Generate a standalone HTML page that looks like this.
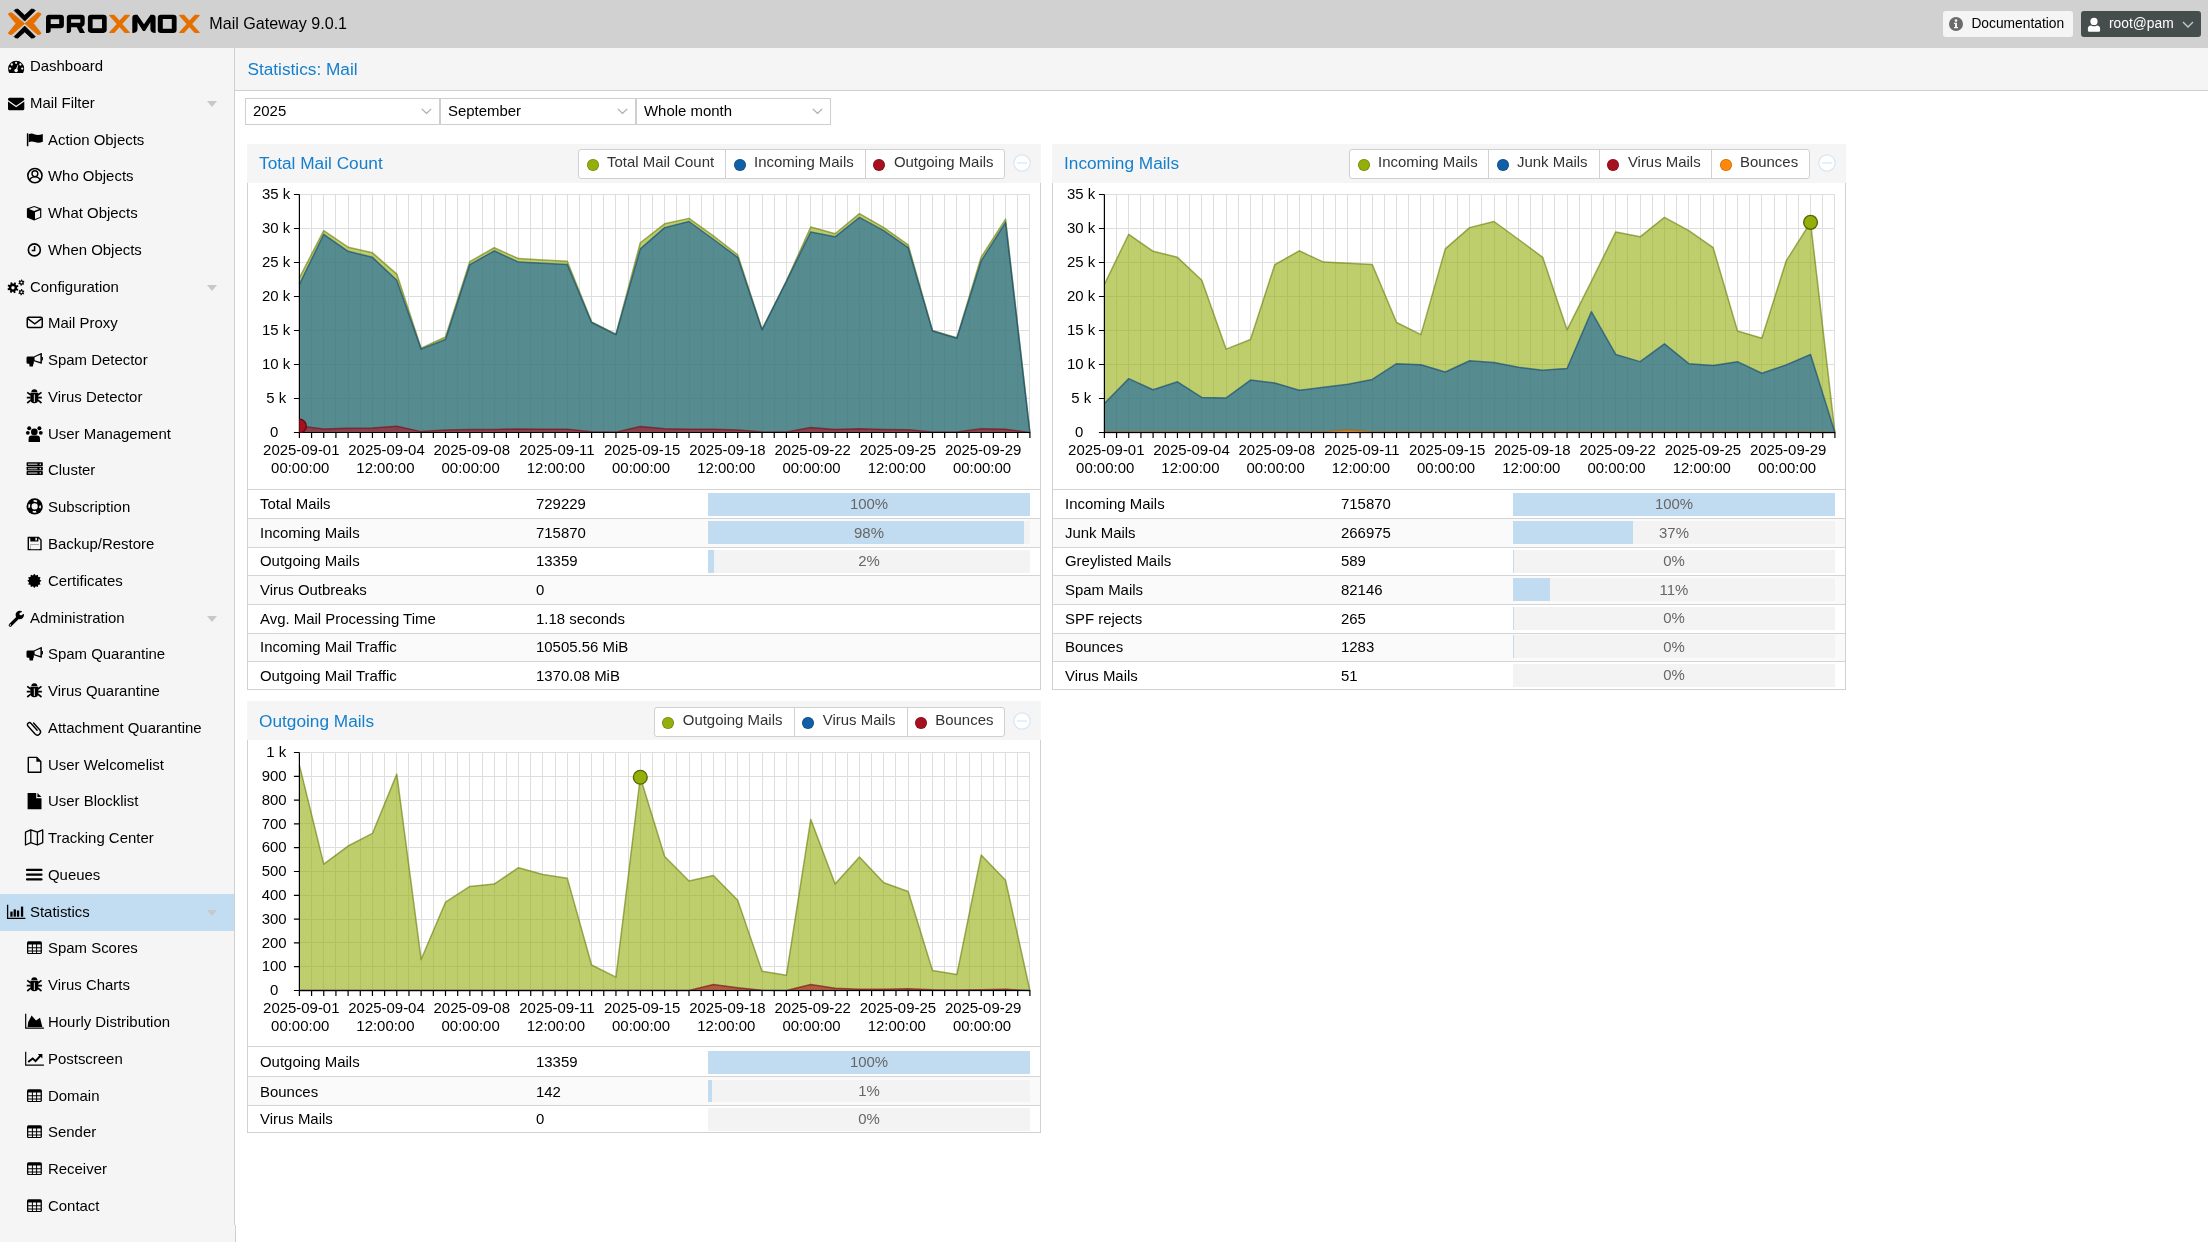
<!DOCTYPE html><html><head><meta charset="utf-8"><title>Proxmox Mail Gateway</title><style>*{box-sizing:border-box}
html,body{margin:0;padding:0}
body{will-change:transform;width:2208px;height:1242px;overflow:hidden;background:#fff;font-family:"Liberation Sans",sans-serif;position:relative;color:#000;font-size:14.95px}
.a{position:absolute}
svg{display:block}
#hdr{left:0;top:0;width:2208px;height:48px;background:#d1d1d1}
#ver{left:209.3px;top:13px;font-size:16.1px;line-height:20px;color:#000;white-space:nowrap}
.hbtn{top:11px;height:26px;border-radius:3px;font-size:13.8px;line-height:26px;white-space:nowrap}
#doc{left:1943px;width:130px;background:#f5f5f5;color:#000}
#usr{left:2081px;width:120px;background:#464d4d;color:#fff}
#side{left:0;top:48px;width:235px;height:1194px;background:#f5f5f5;border-right:1px solid #cfcfcf}
.it{left:0;width:234px;height:36.8px;line-height:36.8px;font-size:14.95px;white-space:nowrap;color:#000}
.it.sel{background:#c2ddf2}
.it span{position:absolute;top:0}
.it svg{position:absolute}
.tri{position:absolute;left:207px;top:16.3px;width:0;height:0;border-left:5px solid transparent;border-right:5px solid transparent;border-top:6px solid #c8c8c8}
#tbar{left:235px;top:48px;width:1973px;height:43px;background:#f5f5f5;border-bottom:1px solid #d0d0d0}
#ttl{left:12.4px;top:10px;font-size:17.25px;line-height:22px;color:#157fcc;white-space:nowrap}
.cmb{top:98px;height:27px;border:1px solid #cfcfcf;background:#fff;font-size:14.95px;line-height:25px;white-space:nowrap}
.cmb span{position:absolute;left:7px;top:-0.8px}
.cmb svg{position:absolute;right:7px;top:9px}
.ph{height:39px;background:#f5f5f5}
.pt{left:12px;top:8px;font-size:17.25px;line-height:22px;color:#157fcc;white-space:nowrap}
.pb{border:1px solid #d0d0d0;border-top:0;background:#fff}
.lg{top:5.3px;height:29.4px;border:1px solid #d0d0d0;border-radius:3px;background:#fff}
.li{position:absolute;top:0;height:27.4px;font-size:14.95px;line-height:24px;color:#333;white-space:nowrap}
.li+.li{border-left:1px solid #d0d0d0}
.dot{position:absolute;top:8.9px;width:12px;height:12px;border-radius:50%;box-shadow:inset 0 0 0 0.8px rgba(0,0,0,0.22)}
.tool{width:18px;height:18px}
.row{left:0;height:28.6px;font-size:14.95px;line-height:28px;white-space:nowrap;border-top:1px solid #d4d4d4}
.row.alt{background:#fafafa}
.bar{position:absolute;top:2.9px;height:22.8px;background:#f3f3f3;overflow:hidden}
.fill{position:absolute;left:0;top:0;height:100%;background:#c1dcf0}
.btxt{position:absolute;left:0;right:0;top:0.3px;text-align:center;line-height:22.7px;color:#666}
</style></head><body><div id="hdr" class="a"><svg class="a" style="left:0;top:0" width="210" height="48" viewBox="0 0 210 48">
<g fill="#e57000" stroke="#e57000" stroke-width="0.8" stroke-linejoin="round">
<path d="M8.3 14.2 Q8.6 12.6 11.8 12.7 L24.5 23.6 L11.8 34.6 Q8.6 34.7 8.3 33.1 L15.9 23.6Z"/>
<path d="M41.1 14.2 Q40.8 12.6 37.6 12.7 L24.9 23.6 L37.6 34.6 Q40.8 34.7 41.1 33.1 L33.5 23.6Z"/>
</g>
<g fill="#000" stroke="#000" stroke-width="0.8" stroke-linejoin="round">
<path d="M14.2 10.6 Q14.6 9 17.9 9.1 L24.7 15.3 L31.4 9.1 Q34.8 9 35.2 10.6 L24.7 21.1Z"/>
<path d="M14.2 36.6 Q14.6 38.2 17.9 38.1 L24.7 31.9 L31.4 38.1 Q34.8 38.2 35.2 36.6 L24.7 26.1Z"/>
</g>
<g fill="#000" fill-rule="evenodd">
<path d="M46 32.9 V18 Q46 14.7 49.3 14.7 H60.6 Q63.9 14.7 63.9 18 V25 Q63.9 28.3 60.6 28.3 H50.7 V30.3 Q50.7 32.9 48 32.9Z M50.7 19.3 V24 H59.2 V19.3Z"/>
<path d="M66.8 32.9 V18 Q66.8 14.7 70.1 14.7 H81.4 Q84.7 14.7 84.7 18 V22.8 Q84.7 26 81.8 27 L85 32.9 H79.8 L76.7 27.3 H71.1 V30.3 Q71.1 32.9 68.5 32.9Z M71.1 19.3 V22.8 H80.3 V19.3Z"/>
<path d="M91.2 14.7 H103.4 Q106.7 14.7 106.7 18 V29.6 Q106.7 32.9 103.4 32.9 H91.2 Q87.9 32.9 87.9 29.6 V18 Q87.9 14.7 91.2 14.7Z M92.6 19.3 V28.3 H102 V19.3Z"/>
<path d="M132.3 33 V17.7 Q132.3 14.7 135.3 14.7 H137.4 L144 24.3 L150.6 14.7 H152.6 Q155.6 14.7 155.6 17.7 V33 Q150.4 33 150.4 29 V22.3 L145 30.9 H143 L137.5 22.3 V29 Q137.5 33 132.3 33Z"/>
<path d="M161 14.7 H173.3 Q176.6 14.7 176.6 18 V29.7 Q176.6 33 173.3 33 H161 Q157.8 33 157.8 29.7 V18 Q157.8 14.7 161 14.7Z M162.8 19 V28.8 H171.8 V19Z"/>
</g>
<g fill="#e57000">
<path d="M109 15.5 Q109.2 14.75 110.5 14.75 H114.2 L119.5 20.5 L124.8 14.75 H128.5 Q129.8 14.75 130 15.5 L122.3 23.9 L130 32.4 Q129.8 33.1 128.5 33.1 H124.8 L119.5 27.3 L114.2 33.1 H110.5 Q109.2 33.1 109 32.4 L116.7 23.9Z"/>
<path d="M178.9 15.5 Q179.1 14.75 180.4 14.75 H184.1 L189.4 20.5 L194.7 14.75 H198.4 Q199.7 14.75 199.9 15.5 L192.2 23.9 L199.9 32.4 Q199.7 33.1 198.4 33.1 H194.7 L189.4 27.3 L184.1 33.1 H180.4 Q179.1 33.1 178.9 32.4 L186.6 23.9Z"/>
</g>
</svg><div id="ver" class="a">Mail Gateway 9.0.1</div><div id="doc" class="a hbtn"><svg class="a" style="left:6px;top:6px" width="14" height="14" viewBox="0 0 14 14"><circle cx="7" cy="7" r="7" fill="#6b6b6b"/><circle cx="7" cy="3.6" r="1.3" fill="#f5f5f5"/><path d="M5 5.8 H8 V10 H9 V11.3 H5 V10 H6 V7.1 H5Z" fill="#f5f5f5"/></svg><span class="a" style="left:28.4px;top:0">Documentation</span></div><div id="usr" class="a hbtn"><svg class="a" style="left:6.3px;top:5.5px" width="14" height="16" viewBox="0 0 14 16"><circle cx="7" cy="4.4" r="3.6" fill="#fff"/><path d="M0.9 13.5 V11.6 Q0.9 8.6 4 8.4 Q7 10.2 10 8.4 Q13.1 8.6 13.1 11.6 V13.5 Q13.1 14.8 11.8 14.8 H2.2 Q0.9 14.8 0.9 13.5Z" fill="#fff"/></svg><span class="a" style="left:28px;top:0">root@pam</span><svg class="a" style="left:101px;top:10px" width="12" height="8" viewBox="0 0 12 8"><path d="M1 1 L6 6 L11 1" fill="none" stroke="#c8c8c8" stroke-width="1.4"/></svg></div></div><div id="side" class="a"><div class="a it" style="top:0.00px"><svg style="left:8px;top:10px;overflow:visible" width="17" height="17" viewBox="0 0 17 17"><path d="M1.2 15.1 Q0.15 13 0.15 10.7 A8 8 0 0 1 16.15 10.7 Q16.15 13 15.1 15.1Z" fill="#000"/><circle cx="2.1" cy="10.6" r="1.15" fill="#f5f5f5"/><circle cx="3.8" cy="6.5" r="1.15" fill="#f5f5f5"/><circle cx="8.1" cy="4.85" r="1.15" fill="#f5f5f5"/><circle cx="12.4" cy="6.5" r="1.15" fill="#f5f5f5"/><circle cx="14.2" cy="10.6" r="1.15" fill="#f5f5f5"/><path d="M7.3 12.4 L9.9 6.6 L10.3 6.8 L9 12.6Z" fill="#f5f5f5"/><circle cx="8.1" cy="12.6" r="1.75" fill="#f5f5f5"/></svg><span style="left:30px">Dashboard</span></div><div class="a it" style="top:36.77px"><svg style="left:8px;top:10px;overflow:visible" width="17" height="17" viewBox="0 0 17 17"><path d="M0 4.3 Q0 2.8 1.5 2.8 H14.8 Q16.3 2.8 16.3 4.3 V5.1 L8.15 10.7 L0 5.1Z M0 6.6 L8.15 12.2 L16.3 6.6 V13.7 Q16.3 15.2 14.8 15.2 H1.5 Q0 15.2 0 13.7Z" fill="#000"/></svg><span style="left:30px">Mail Filter</span><div class="tri"></div></div><div class="a it" style="top:73.54px"><svg style="left:26px;top:10px;overflow:visible" width="17" height="17" viewBox="0 0 17 17"><path d="M1.6 1.3 V14.2" stroke="#000" stroke-width="1.5"/><path d="M2.7 2.2 Q5.5 0.9 8.8 2.4 Q12.5 3.6 16.8 1.9 V9.8 Q12.5 11.5 8.8 10.1 Q5.5 8.8 2.7 10.2Z" fill="#000"/></svg><span style="left:48px">Action Objects</span></div><div class="a it" style="top:110.31px"><svg style="left:26px;top:10px;overflow:visible" width="17" height="17" viewBox="0 0 17 17"><circle cx="8.9" cy="7.6" r="7.1" fill="none" stroke="#000" stroke-width="1.6"/><circle cx="8.9" cy="5.7" r="2.9" fill="none" stroke="#000" stroke-width="1.4"/><path d="M3.6 12.4 Q4.6 8.9 8.9 8.9 Q13.2 8.9 14.2 12.4" fill="none" stroke="#000" stroke-width="1.4"/></svg><span style="left:48px">Who Objects</span></div><div class="a it" style="top:147.08px"><svg style="left:26px;top:10px;overflow:visible" width="17" height="17" viewBox="0 0 17 17"><path d="M8.1 0.9 L15.3 3.6 V12.6 L8.1 15.4 L0.9 12.6 V3.6Z" fill="#000"/><path d="M9 7.2 L14.1 5.2 V12 L9 14Z" fill="#f5f5f5"/><path d="M3 3.9 L8.1 2.1 L13.2 3.9 L8.1 5.9Z" fill="#f5f5f5"/></svg><span style="left:48px">What Objects</span></div><div class="a it" style="top:183.85px"><svg style="left:26px;top:10px;overflow:visible" width="17" height="17" viewBox="0 0 17 17"><circle cx="8.35" cy="7.9" r="6" fill="none" stroke="#000" stroke-width="1.6"/><path d="M8.6 4.1 V8.4 H5.7" fill="none" stroke="#000" stroke-width="1.5"/></svg><span style="left:48px">When Objects</span></div><div class="a it" style="top:220.62px"><svg style="left:8px;top:10px;overflow:visible" width="17" height="17" viewBox="0 0 17 17"><path d="M8.97 9.51 L10.31 10.32 L9.59 11.83 L8.12 11.30 L7.22 12.12 L7.59 13.64 L6.02 14.20 L5.35 12.78 L4.14 12.72 L3.33 14.06 L1.82 13.34 L2.35 11.87 L1.53 10.97 L0.01 11.34 L-0.55 9.77 L0.87 9.10 L0.93 7.89 L-0.41 7.08 L0.31 5.57 L1.78 6.10 L2.68 5.28 L2.31 3.76 L3.88 3.20 L4.55 4.62 L5.76 4.68 L6.57 3.34 L8.08 4.06 L7.55 5.53 L8.37 6.43 L9.89 6.06 L10.45 7.63 L9.03 8.30Z M6.65 8.70 A1.7 1.7 0 1 0 3.25 8.70 A1.7 1.7 0 1 0 6.65 8.70Z" fill="#000" fill-rule="evenodd"/><path d="M15.50 4.25 L16.22 4.88 L15.51 5.87 L14.68 5.39 L13.89 5.75 L13.70 6.69 L12.48 6.56 L12.49 5.60 L11.79 5.10 L10.88 5.41 L10.38 4.29 L11.21 3.82 L11.30 2.95 L10.58 2.32 L11.29 1.33 L12.12 1.81 L12.91 1.45 L13.10 0.51 L14.32 0.64 L14.31 1.60 L15.01 2.10 L15.92 1.79 L16.42 2.91 L15.59 3.38Z M14.40 3.60 A1.0 1.0 0 1 0 12.40 3.60 A1.0 1.0 0 1 0 14.40 3.60Z" fill="#000" fill-rule="evenodd"/><path d="M15.50 13.85 L16.22 14.48 L15.51 15.47 L14.68 14.99 L13.89 15.35 L13.70 16.29 L12.48 16.16 L12.49 15.20 L11.79 14.70 L10.88 15.01 L10.38 13.89 L11.21 13.42 L11.30 12.55 L10.58 11.92 L11.29 10.93 L12.12 11.41 L12.91 11.05 L13.10 10.11 L14.32 10.24 L14.31 11.20 L15.01 11.70 L15.92 11.39 L16.42 12.51 L15.59 12.98Z M14.40 13.20 A1.0 1.0 0 1 0 12.40 13.20 A1.0 1.0 0 1 0 14.40 13.20Z" fill="#000" fill-rule="evenodd"/></svg><span style="left:30px">Configuration</span><div class="tri"></div></div><div class="a it" style="top:257.39px"><svg style="left:26px;top:10px;overflow:visible" width="17" height="17" viewBox="0 0 17 17"><rect x="1.25" y="2.25" width="15" height="10.3" rx="1.5" fill="none" stroke="#000" stroke-width="1.5"/><path d="M1.8 3.6 L8.75 8.8 L15.7 3.6" fill="none" stroke="#000" stroke-width="1.4"/></svg><span style="left:48px">Mail Proxy</span></div><div class="a it" style="top:294.16px"><svg style="left:26px;top:10px;overflow:visible" width="17" height="17" viewBox="0 0 17 17"><path d="M0.5 5.8 Q0.5 4.4 2 4.4 H7.8 L15.2 1 Q15.9 0.8 15.9 1.6 V11.3 Q15.9 12 15.2 11.8 L7.8 9.2 V11.8 H7.3 L7 14 Q6.9 14.6 6.3 14.6 H4.2 Q3.5 14.6 3.5 14 L3.2 11.8 H2 Q0.5 11.8 0.5 10.3Z" fill="#000"/><path d="M8.6 5.3 L14.4 2.7 V10.1 L8.6 8.3Z" fill="#f5f5f5"/><rect x="15.6" y="5" width="1.3" height="3.4" fill="#000"/></svg><span style="left:48px">Spam Detector</span></div><div class="a it" style="top:330.93px"><svg style="left:26px;top:10px;overflow:visible" width="17" height="17" viewBox="0 0 17 17"><path d="M5.3 3.3 Q5.3 0.2 8.35 0.2 Q11.4 0.2 11.4 3.3Z" fill="#000"/><path d="M4.4 3.8 H12.3 V10 Q12.3 14.3 8.35 14.3 Q4.4 14.3 4.4 10Z" fill="#000"/><path d="M1.2 3.4 L4.8 6 M15.5 3.4 L11.9 6 M0.8 8.6 H4.6 M15.9 8.6 H12.1 M1.2 14 L4.8 11.2 M15.5 14 L11.9 11.2" stroke="#000" stroke-width="1.6"/><path d="M8.35 5.5 V13" stroke="#f5f5f5" stroke-width="0.9"/></svg><span style="left:48px">Virus Detector</span></div><div class="a it" style="top:367.70px"><svg style="left:26px;top:10px;overflow:visible" width="17" height="17" viewBox="0 0 17 17"><circle cx="8.3" cy="5.9" r="3.3" fill="#000"/><circle cx="3.2" cy="2.3" r="2" fill="#000"/><circle cx="13.4" cy="2.3" r="2" fill="#000"/><circle cx="1.8" cy="6.8" r="1.9" fill="#000"/><circle cx="14.8" cy="6.8" r="1.9" fill="#000"/><path d="M2.6 16 V12.8 Q2.6 9.6 5.8 9.6 H10.8 Q14 9.6 14 12.8 V16Z" fill="#000"/></svg><span style="left:48px">User Management</span></div><div class="a it" style="top:404.47px"><svg style="left:26px;top:10px;overflow:visible" width="17" height="17" viewBox="0 0 17 17"><rect x="0.6" y="0.3" width="16.2" height="3.9" rx="0.6" fill="#000"/><rect x="2" y="1.5" width="9.5" height="1.5" fill="#9a9a9a"/><circle cx="14.3" cy="2.25" r="0.8" fill="#f5f5f5"/><rect x="0.6" y="4.7" width="16.2" height="3.9" rx="0.6" fill="#000"/><rect x="2" y="5.9" width="9.5" height="1.5" fill="#9a9a9a"/><circle cx="14.3" cy="6.65" r="0.8" fill="#f5f5f5"/><rect x="0.6" y="9.1" width="16.2" height="3.9" rx="0.6" fill="#000"/><rect x="2" y="10.299999999999999" width="9.5" height="1.5" fill="#9a9a9a"/><circle cx="14.3" cy="11.049999999999999" r="0.8" fill="#f5f5f5"/></svg><span style="left:48px">Cluster</span></div><div class="a it" style="top:441.24px"><svg style="left:26px;top:10px;overflow:visible" width="17" height="17" viewBox="0 0 17 17"><circle cx="8.65" cy="7.4" r="8.1" fill="#000"/><circle cx="8.65" cy="7.4" r="5.5" fill="none" stroke="#f5f5f5" stroke-width="1.7" stroke-dasharray="3.6 5.04" stroke-dashoffset="1.8"/><circle cx="8.65" cy="7.4" r="3.1" fill="#f5f5f5"/></svg><span style="left:48px">Subscription</span></div><div class="a it" style="top:478.01px"><svg style="left:26px;top:10px;overflow:visible" width="17" height="17" viewBox="0 0 17 17"><path d="M1.6 0.8 H12.8 L15.7 3.7 V14.3 H1.6Z" fill="#000"/><rect x="4.4" y="8.6" width="8.7" height="4.6" fill="#f5f5f5"/><path d="M3 2.2 H4.3 V5.6 H12.4 V2.2 L14.3 4.3 V12.9 H3Z M4.4 8.6 V13 H13 V8.6Z" fill="#f5f5f5" fill-rule="evenodd"/><rect x="9.4" y="1.8" width="1.5" height="2.6" fill="#f5f5f5"/></svg><span style="left:48px">Backup/Restore</span></div><div class="a it" style="top:514.78px"><svg style="left:26px;top:10px;overflow:visible" width="17" height="17" viewBox="0 0 17 17"><path d="M15.45 7.85 L13.66 9.27 L14.50 11.40 L12.24 11.74 L11.90 14.00 L9.77 13.16 L8.35 14.95 L6.93 13.16 L4.80 14.00 L4.46 11.74 L2.20 11.40 L3.04 9.27 L1.25 7.85 L3.04 6.43 L2.20 4.30 L4.46 3.96 L4.80 1.70 L6.93 2.54 L8.35 0.75 L9.77 2.54 L11.90 1.70 L12.24 3.96 L14.50 4.30 L13.66 6.43Z" fill="#000"/></svg><span style="left:48px">Certificates</span></div><div class="a it" style="top:551.55px"><svg style="left:8px;top:10px;overflow:visible" width="17" height="17" viewBox="0 0 17 17"><path d="M2.3 15.1 L9.6 7.8" stroke="#000" stroke-width="3.3" stroke-linecap="round"/><circle cx="11.8" cy="5" r="4.2" fill="#000"/><path d="M12.3 4.5 L14.5 0.2 L17.4 3.1 L13.1 5.3Z" fill="#f5f5f5"/><circle cx="12.9" cy="3.9" r="1.45" fill="#f5f5f5"/><circle cx="2.3" cy="15.1" r="0.75" fill="#f5f5f5"/></svg><span style="left:30px">Administration</span><div class="tri"></div></div><div class="a it" style="top:588.32px"><svg style="left:26px;top:10px;overflow:visible" width="17" height="17" viewBox="0 0 17 17"><path d="M0.5 5.8 Q0.5 4.4 2 4.4 H7.8 L15.2 1 Q15.9 0.8 15.9 1.6 V11.3 Q15.9 12 15.2 11.8 L7.8 9.2 V11.8 H7.3 L7 14 Q6.9 14.6 6.3 14.6 H4.2 Q3.5 14.6 3.5 14 L3.2 11.8 H2 Q0.5 11.8 0.5 10.3Z" fill="#000"/><path d="M8.6 5.3 L14.4 2.7 V10.1 L8.6 8.3Z" fill="#f5f5f5"/><rect x="15.6" y="5" width="1.3" height="3.4" fill="#000"/></svg><span style="left:48px">Spam Quarantine</span></div><div class="a it" style="top:625.09px"><svg style="left:26px;top:10px;overflow:visible" width="17" height="17" viewBox="0 0 17 17"><path d="M5.3 3.3 Q5.3 0.2 8.35 0.2 Q11.4 0.2 11.4 3.3Z" fill="#000"/><path d="M4.4 3.8 H12.3 V10 Q12.3 14.3 8.35 14.3 Q4.4 14.3 4.4 10Z" fill="#000"/><path d="M1.2 3.4 L4.8 6 M15.5 3.4 L11.9 6 M0.8 8.6 H4.6 M15.9 8.6 H12.1 M1.2 14 L4.8 11.2 M15.5 14 L11.9 11.2" stroke="#000" stroke-width="1.6"/><path d="M8.35 5.5 V13" stroke="#f5f5f5" stroke-width="0.9"/></svg><span style="left:48px">Virus Quarantine</span></div><div class="a it" style="top:661.86px"><svg style="left:26px;top:10px;overflow:visible" width="17" height="17" viewBox="0 0 17 17"><g transform="rotate(-42 8.65 7.6)"><path d="M10.9 3.5 V12.6 A3.1 3.1 0 0 1 4.7 12.6 V1.9 A2 2 0 0 1 8.7 1.9 V11.3" fill="none" stroke="#000" stroke-width="1.4" stroke-linecap="round"/></g></svg><span style="left:48px">Attachment Quarantine</span></div><div class="a it" style="top:698.63px"><svg style="left:26px;top:10px;overflow:visible" width="17" height="17" viewBox="0 0 17 17"><path d="M2.3 0.35 H10.6 L14.8 4.5 V15.2 H2.3Z" fill="none" stroke="#000" stroke-width="1.4" stroke-linejoin="round"/><path d="M10.4 0.6 V4.7 H14.6Z" fill="#000"/></svg><span style="left:48px">User Welcomelist</span></div><div class="a it" style="top:735.40px"><svg style="left:26px;top:10px;overflow:visible" width="17" height="17" viewBox="0 0 17 17"><path d="M1.6 -0.1 H10.2 V5.3 H15.5 V16.3 H1.6Z" fill="#000"/><path d="M11.4 -0.1 L15.5 4 H11.4Z" fill="#000"/></svg><span style="left:48px">User Blocklist</span></div><div class="a it" style="top:772.17px"><svg style="left:26px;top:10px;overflow:visible" width="17" height="17" viewBox="0 0 17 17"><path d="M-0.5 2.2 L4.8 -0.1 L11.4 2.2 L16.7 -0.1 V12.7 L11.4 15 L4.8 12.7 L-0.5 15Z M4.8 -0.1 V12.7 M11.4 2.2 V15" fill="none" stroke="#000" stroke-width="1.3" stroke-linejoin="round"/></svg><span style="left:48px">Tracking Center</span></div><div class="a it" style="top:808.94px"><svg style="left:26px;top:10px;overflow:visible" width="17" height="17" viewBox="0 0 17 17"><path d="M1 2.9 H15.5 M1 7.65 H15.5 M1 12.4 H15.5" stroke="#000" stroke-width="2.2" stroke-linecap="round"/></svg><span style="left:48px">Queues</span></div><div class="a it sel" style="top:845.71px"><svg style="left:8px;top:10px;overflow:visible" width="17" height="17" viewBox="0 0 17 17"><path d="M-0.4 0.8 V14.4 H17.4" fill="none" stroke="#000" stroke-width="1.3"/><rect x="2.3" y="7.6" width="2.3" height="5.1" fill="#000"/><rect x="5.6" y="5.4" width="2.3" height="7.3" fill="#000"/><rect x="8.9" y="6.5" width="2.3" height="6.2" fill="#000"/><rect x="12.9" y="2.6" width="2.3" height="10.1" fill="#000"/></svg><span style="left:30px">Statistics</span><div class="tri"></div></div><div class="a it" style="top:882.48px"><svg style="left:26px;top:10px;overflow:visible" width="17" height="17" viewBox="0 0 17 17"><rect x="1" y="1.2" width="14.9" height="12.9" rx="1.6" fill="#000"/><path d="M2.3 4.6 H5.9 V7.3 H2.3Z M6.9 4.6 H10.1 V7.3 H6.9Z M11.1 4.6 H14.6 V7.3 H11.1Z M2.3 8.3 H5.9 V10.4 H2.3Z M6.9 8.3 H10.1 V10.4 H6.9Z M11.1 8.3 H14.6 V10.4 H11.1Z M2.3 11.4 H5.9 V12.9 H2.3Z M6.9 11.4 H10.1 V12.9 H6.9Z M11.1 11.4 H14.6 V12.9 H11.1Z" fill="#f5f5f5"/></svg><span style="left:48px">Spam Scores</span></div><div class="a it" style="top:919.25px"><svg style="left:26px;top:10px;overflow:visible" width="17" height="17" viewBox="0 0 17 17"><path d="M5.3 3.3 Q5.3 0.2 8.35 0.2 Q11.4 0.2 11.4 3.3Z" fill="#000"/><path d="M4.4 3.8 H12.3 V10 Q12.3 14.3 8.35 14.3 Q4.4 14.3 4.4 10Z" fill="#000"/><path d="M1.2 3.4 L4.8 6 M15.5 3.4 L11.9 6 M0.8 8.6 H4.6 M15.9 8.6 H12.1 M1.2 14 L4.8 11.2 M15.5 14 L11.9 11.2" stroke="#000" stroke-width="1.6"/><path d="M8.35 5.5 V13" stroke="#f5f5f5" stroke-width="0.9"/></svg><span style="left:48px">Virus Charts</span></div><div class="a it" style="top:956.02px"><svg style="left:26px;top:10px;overflow:visible" width="17" height="17" viewBox="0 0 17 17"><path d="M-0.3 -0.2 V14.1 H17.9" fill="none" stroke="#000" stroke-width="1.2"/><path d="M1.6 12.9 L2.2 8 L5.6 1.6 L10.1 6.6 L14 3.8 L16.4 12.9Z" fill="#000"/></svg><span style="left:48px">Hourly Distribution</span></div><div class="a it" style="top:992.79px"><svg style="left:26px;top:10px;overflow:visible" width="17" height="17" viewBox="0 0 17 17"><path d="M-0.3 0.8 V14.2 H17.9" fill="none" stroke="#000" stroke-width="1.2"/><path d="M2.2 11 L6.7 7.4 L9.5 10.2 L14.6 4.5" fill="none" stroke="#000" stroke-width="1.9"/><path d="M11.8 2.9 H16.4 V7.5Z" fill="#000"/></svg><span style="left:48px">Postscreen</span></div><div class="a it" style="top:1029.56px"><svg style="left:26px;top:10px;overflow:visible" width="17" height="17" viewBox="0 0 17 17"><rect x="1" y="1.2" width="14.9" height="12.9" rx="1.6" fill="#000"/><path d="M2.3 4.6 H5.9 V7.3 H2.3Z M6.9 4.6 H10.1 V7.3 H6.9Z M11.1 4.6 H14.6 V7.3 H11.1Z M2.3 8.3 H5.9 V10.4 H2.3Z M6.9 8.3 H10.1 V10.4 H6.9Z M11.1 8.3 H14.6 V10.4 H11.1Z M2.3 11.4 H5.9 V12.9 H2.3Z M6.9 11.4 H10.1 V12.9 H6.9Z M11.1 11.4 H14.6 V12.9 H11.1Z" fill="#f5f5f5"/></svg><span style="left:48px">Domain</span></div><div class="a it" style="top:1066.33px"><svg style="left:26px;top:10px;overflow:visible" width="17" height="17" viewBox="0 0 17 17"><rect x="1" y="1.2" width="14.9" height="12.9" rx="1.6" fill="#000"/><path d="M2.3 4.6 H5.9 V7.3 H2.3Z M6.9 4.6 H10.1 V7.3 H6.9Z M11.1 4.6 H14.6 V7.3 H11.1Z M2.3 8.3 H5.9 V10.4 H2.3Z M6.9 8.3 H10.1 V10.4 H6.9Z M11.1 8.3 H14.6 V10.4 H11.1Z M2.3 11.4 H5.9 V12.9 H2.3Z M6.9 11.4 H10.1 V12.9 H6.9Z M11.1 11.4 H14.6 V12.9 H11.1Z" fill="#f5f5f5"/></svg><span style="left:48px">Sender</span></div><div class="a it" style="top:1103.10px"><svg style="left:26px;top:10px;overflow:visible" width="17" height="17" viewBox="0 0 17 17"><rect x="1" y="1.2" width="14.9" height="12.9" rx="1.6" fill="#000"/><path d="M2.3 4.6 H5.9 V7.3 H2.3Z M6.9 4.6 H10.1 V7.3 H6.9Z M11.1 4.6 H14.6 V7.3 H11.1Z M2.3 8.3 H5.9 V10.4 H2.3Z M6.9 8.3 H10.1 V10.4 H6.9Z M11.1 8.3 H14.6 V10.4 H11.1Z M2.3 11.4 H5.9 V12.9 H2.3Z M6.9 11.4 H10.1 V12.9 H6.9Z M11.1 11.4 H14.6 V12.9 H11.1Z" fill="#f5f5f5"/></svg><span style="left:48px">Receiver</span></div><div class="a it" style="top:1139.87px"><svg style="left:26px;top:10px;overflow:visible" width="17" height="17" viewBox="0 0 17 17"><rect x="1" y="1.2" width="14.9" height="12.9" rx="1.6" fill="#000"/><path d="M2.3 4.6 H5.9 V7.3 H2.3Z M6.9 4.6 H10.1 V7.3 H6.9Z M11.1 4.6 H14.6 V7.3 H11.1Z M2.3 8.3 H5.9 V10.4 H2.3Z M6.9 8.3 H10.1 V10.4 H6.9Z M11.1 8.3 H14.6 V10.4 H11.1Z M2.3 11.4 H5.9 V12.9 H2.3Z M6.9 11.4 H10.1 V12.9 H6.9Z M11.1 11.4 H14.6 V12.9 H11.1Z" fill="#f5f5f5"/></svg><span style="left:48px">Contact</span></div></div><div class="a" style="left:234px;top:1225px;width:1px;height:17px;background:#f5f5f5"></div><div class="a" style="left:235px;top:1225px;width:1px;height:17px;background:#cfcfcf"></div><div id="tbar" class="a"><div id="ttl" class="a">Statistics: Mail</div></div><div class="a cmb" style="left:245px;width:195px"><span>2025</span><svg width="11" height="7" viewBox="0 0 11 7"><path d="M0.8 0.8 L5.5 5.5 L10.2 0.8" fill="none" stroke="#aaa" stroke-width="1.2"/></svg></div><div class="a cmb" style="left:440px;width:196px"><span>September</span><svg width="11" height="7" viewBox="0 0 11 7"><path d="M0.8 0.8 L5.5 5.5 L10.2 0.8" fill="none" stroke="#aaa" stroke-width="1.2"/></svg></div><div class="a cmb" style="left:636px;width:195px"><span>Whole month</span><svg width="11" height="7" viewBox="0 0 11 7"><path d="M0.8 0.8 L5.5 5.5 L10.2 0.8" fill="none" stroke="#aaa" stroke-width="1.2"/></svg></div><!--CHART1--><div class="a ph" style="left:247px;top:144px;width:794px"><div class="a pt" style="top:8px">Total Mail Count</div><div class="a lg" style="left:331.3px;width:426.7px;top:5.3px"><div class="li" style="left:0.0px;width:146.1px"><div class="dot" style="left:7.3px;background:#94ae0a"></div><span class="a" style="left:27.7px;top:0">Total Mail Count</span></div><div class="li" style="left:146.1px;width:139.8px"><div class="dot" style="left:7.3px;background:#115fa6"></div><span class="a" style="left:27.7px;top:0">Incoming Mails</span></div><div class="li" style="left:285.9px;width:138.1px"><div class="dot" style="left:7.3px;background:#a61120"></div><span class="a" style="left:27.7px;top:0">Outgoing Mails</span></div></div><svg class="a tool" style="left:765.5px;top:10px" viewBox="0 0 18 18"><circle cx="9" cy="9" r="8.2" fill="#fff" stroke="#d6e6f5" stroke-width="1.2"/><path d="M4 9 H14" stroke="#d6e6f5" stroke-width="1.2"/></svg></div><div class="a pb" style="left:247px;top:183px;width:794px;height:507.0px"><svg class="a" style="left:-1px;top:0px" width="794" height="306" viewBox="0 0 794 306"><path d="M52.40 11.5 V249.5 M64.58 11.5 V249.5 M76.75 11.5 V249.5 M88.93 11.5 V249.5 M101.10 11.5 V249.5 M113.28 11.5 V249.5 M125.45 11.5 V249.5 M137.62 11.5 V249.5 M149.80 11.5 V249.5 M161.97 11.5 V249.5 M174.15 11.5 V249.5 M186.33 11.5 V249.5 M198.50 11.5 V249.5 M210.68 11.5 V249.5 M222.85 11.5 V249.5 M235.03 11.5 V249.5 M247.20 11.5 V249.5 M259.38 11.5 V249.5 M271.55 11.5 V249.5 M283.73 11.5 V249.5 M295.90 11.5 V249.5 M308.07 11.5 V249.5 M320.25 11.5 V249.5 M332.43 11.5 V249.5 M344.60 11.5 V249.5 M356.77 11.5 V249.5 M368.95 11.5 V249.5 M381.12 11.5 V249.5 M393.30 11.5 V249.5 M405.48 11.5 V249.5 M417.65 11.5 V249.5 M429.82 11.5 V249.5 M442.00 11.5 V249.5 M454.18 11.5 V249.5 M466.35 11.5 V249.5 M478.52 11.5 V249.5 M490.70 11.5 V249.5 M502.88 11.5 V249.5 M515.05 11.5 V249.5 M527.23 11.5 V249.5 M539.40 11.5 V249.5 M551.58 11.5 V249.5 M563.75 11.5 V249.5 M575.92 11.5 V249.5 M588.10 11.5 V249.5 M600.27 11.5 V249.5 M612.45 11.5 V249.5 M624.62 11.5 V249.5 M636.80 11.5 V249.5 M648.98 11.5 V249.5 M661.15 11.5 V249.5 M673.33 11.5 V249.5 M685.50 11.5 V249.5 M697.68 11.5 V249.5 M709.85 11.5 V249.5 M722.02 11.5 V249.5 M734.20 11.5 V249.5 M746.38 11.5 V249.5 M758.55 11.5 V249.5 M770.73 11.5 V249.5 M782.90 11.5 V249.5 M52.4 249.50 H782.90 M52.4 215.50 H782.90 M52.4 181.50 H782.90 M52.4 147.50 H782.90 M52.4 113.50 H782.90 M52.4 79.50 H782.90 M52.4 45.50 H782.90 M52.4 11.50 H782.90" stroke="#dedede" stroke-width="1" fill="none" shape-rendering="crispEdges"/><path d="M52.40 94.89 L76.75 47.67 L101.10 64.22 L125.45 69.84 L149.80 91.07 L174.15 165.25 L198.50 153.95 L222.85 78.57 L247.20 64.76 L271.55 75.58 L295.90 77.00 L320.25 78.33 L344.60 138.82 L368.95 151.27 L393.30 59.74 L417.65 40.79 L442.00 35.37 L466.35 52.96 L490.70 71.75 L515.05 146.27 L539.40 97.97 L563.75 44.01 L588.10 50.76 L612.45 30.60 L636.80 44.60 L661.15 61.78 L685.50 147.47 L709.85 154.80 L734.20 74.07 L758.55 36.16 L782.90 249.50 L782.90 249.5 L52.4 249.5Z" fill="#94ae0a" fill-opacity="0.6"/><path d="M52.40 94.89 L76.75 47.67 L101.10 64.22 L125.45 69.84 L149.80 91.07 L174.15 165.25 L198.50 153.95 L222.85 78.57 L247.20 64.76 L271.55 75.58 L295.90 77.00 L320.25 78.33 L344.60 138.82 L368.95 151.27 L393.30 59.74 L417.65 40.79 L442.00 35.37 L466.35 52.96 L490.70 71.75 L515.05 146.27 L539.40 97.97 L563.75 44.01 L588.10 50.76 L612.45 30.60 L636.80 44.60 L661.15 61.78 L685.50 147.47 L709.85 154.80 L734.20 74.07 L758.55 36.16 L782.90 249.50" fill="none" stroke="#6a7d07" stroke-opacity="0.62" stroke-width="1.5" stroke-linejoin="round"/><path d="M52.40 101.33 L76.75 51.28 L101.10 68.35 L125.45 74.33 L149.80 97.25 L174.15 166.13 L198.50 156.48 L222.85 81.54 L247.20 67.80 L271.55 79.09 L295.90 80.32 L320.25 81.54 L344.60 139.54 L368.95 151.65 L393.30 65.83 L417.65 44.62 L442.00 38.50 L466.35 56.24 L490.70 74.33 L515.05 146.82 L539.40 98.40 L563.75 48.90 L588.10 53.80 L612.45 34.42 L636.80 47.68 L661.15 64.61 L685.50 148.04 L709.85 155.25 L734.20 77.94 L758.55 39.31 L782.90 249.50 L782.90 249.5 L52.4 249.5Z" fill="#115fa6" fill-opacity="0.6"/><path d="M52.40 101.33 L76.75 51.28 L101.10 68.35 L125.45 74.33 L149.80 97.25 L174.15 166.13 L198.50 156.48 L222.85 81.54 L247.20 67.80 L271.55 79.09 L295.90 80.32 L320.25 81.54 L344.60 139.54 L368.95 151.65 L393.30 65.83 L417.65 44.62 L442.00 38.50 L466.35 56.24 L490.70 74.33 L515.05 146.82 L539.40 98.40 L563.75 48.90 L588.10 53.80 L612.45 34.42 L636.80 47.68 L661.15 64.61 L685.50 148.04 L709.85 155.25 L734.20 77.94 L758.55 39.31 L782.90 249.50" fill="none" stroke="#0c4477" stroke-opacity="0.62" stroke-width="1.5" stroke-linejoin="round"/><path d="M52.40 243.06 L76.75 245.89 L101.10 245.37 L125.45 245.01 L149.80 243.32 L174.15 248.62 L198.50 246.98 L222.85 246.53 L247.20 246.46 L271.55 245.99 L295.90 246.19 L320.25 246.29 L344.60 248.77 L368.95 249.12 L393.30 243.41 L417.65 245.67 L442.00 246.37 L466.35 246.22 L490.70 246.92 L515.05 248.95 L539.40 249.06 L563.75 244.61 L588.10 246.46 L612.45 245.69 L636.80 246.42 L661.15 246.67 L685.50 248.93 L709.85 249.04 L734.20 245.63 L758.55 246.35 L782.90 249.50 L782.90 249.5 L52.4 249.5Z" fill="#a61120" fill-opacity="0.6"/><path d="M52.40 243.06 L76.75 245.89 L101.10 245.37 L125.45 245.01 L149.80 243.32 L174.15 248.62 L198.50 246.98 L222.85 246.53 L247.20 246.46 L271.55 245.99 L295.90 246.19 L320.25 246.29 L344.60 248.77 L368.95 249.12 L393.30 243.41 L417.65 245.67 L442.00 246.37 L466.35 246.22 L490.70 246.92 L515.05 248.95 L539.40 249.06 L563.75 244.61 L588.10 246.46 L612.45 245.69 L636.80 246.42 L661.15 246.67 L685.50 248.93 L709.85 249.04 L734.20 245.63 L758.55 246.35 L782.90 249.50" fill="none" stroke="#770c17" stroke-opacity="0.62" stroke-width="1.5" stroke-linejoin="round"/><path d="M52.4 11.5 V249.5 H783.40 M46.90 249.50 H52.4 M46.90 215.50 H52.4 M46.90 181.50 H52.4 M46.90 147.50 H52.4 M46.90 113.50 H52.4 M46.90 79.50 H52.4 M46.90 45.50 H52.4 M46.90 11.50 H52.4 M52.40 249.5 V255.00 M64.58 249.5 V255.00 M76.75 249.5 V255.00 M88.93 249.5 V255.00 M101.10 249.5 V255.00 M113.28 249.5 V255.00 M125.45 249.5 V255.00 M137.62 249.5 V255.00 M149.80 249.5 V255.00 M161.97 249.5 V255.00 M174.15 249.5 V255.00 M186.33 249.5 V255.00 M198.50 249.5 V255.00 M210.68 249.5 V255.00 M222.85 249.5 V255.00 M235.03 249.5 V255.00 M247.20 249.5 V255.00 M259.38 249.5 V255.00 M271.55 249.5 V255.00 M283.73 249.5 V255.00 M295.90 249.5 V255.00 M308.07 249.5 V255.00 M320.25 249.5 V255.00 M332.43 249.5 V255.00 M344.60 249.5 V255.00 M356.77 249.5 V255.00 M368.95 249.5 V255.00 M381.12 249.5 V255.00 M393.30 249.5 V255.00 M405.48 249.5 V255.00 M417.65 249.5 V255.00 M429.82 249.5 V255.00 M442.00 249.5 V255.00 M454.18 249.5 V255.00 M466.35 249.5 V255.00 M478.52 249.5 V255.00 M490.70 249.5 V255.00 M502.88 249.5 V255.00 M515.05 249.5 V255.00 M527.23 249.5 V255.00 M539.40 249.5 V255.00 M551.58 249.5 V255.00 M563.75 249.5 V255.00 M575.92 249.5 V255.00 M588.10 249.5 V255.00 M600.27 249.5 V255.00 M612.45 249.5 V255.00 M624.62 249.5 V255.00 M636.80 249.5 V255.00 M648.98 249.5 V255.00 M661.15 249.5 V255.00 M673.33 249.5 V255.00 M685.50 249.5 V255.00 M697.68 249.5 V255.00 M709.85 249.5 V255.00 M722.02 249.5 V255.00 M734.20 249.5 V255.00 M746.38 249.5 V255.00 M758.55 249.5 V255.00 M770.73 249.5 V255.00 M782.90 249.5 V255.00" stroke="#000" stroke-width="1.2" fill="none"/><text x="27.10" y="254.20" text-anchor="middle" font-size="14.95" fill="#000">0</text><text x="29.17" y="220.20" text-anchor="middle" font-size="14.95" fill="#000">5 k</text><text x="29.17" y="186.20" text-anchor="middle" font-size="14.95" fill="#000">10 k</text><text x="29.17" y="152.20" text-anchor="middle" font-size="14.95" fill="#000">15 k</text><text x="29.17" y="118.20" text-anchor="middle" font-size="14.95" fill="#000">20 k</text><text x="29.17" y="84.20" text-anchor="middle" font-size="14.95" fill="#000">25 k</text><text x="29.17" y="50.20" text-anchor="middle" font-size="14.95" fill="#000">30 k</text><text x="29.17" y="16.20" text-anchor="middle" font-size="14.95" fill="#000">35 k</text><text x="54.30" y="272.00" text-anchor="middle" font-size="14.95" fill="#000">2025-09-01</text><text x="53.20" y="289.60" text-anchor="middle" font-size="14.95" fill="#000">00:00:00</text><text x="139.53" y="272.00" text-anchor="middle" font-size="14.95" fill="#000">2025-09-04</text><text x="138.43" y="289.60" text-anchor="middle" font-size="14.95" fill="#000">12:00:00</text><text x="224.75" y="272.00" text-anchor="middle" font-size="14.95" fill="#000">2025-09-08</text><text x="223.65" y="289.60" text-anchor="middle" font-size="14.95" fill="#000">00:00:00</text><text x="309.97" y="272.00" text-anchor="middle" font-size="14.95" fill="#000">2025-09-11</text><text x="308.88" y="289.60" text-anchor="middle" font-size="14.95" fill="#000">12:00:00</text><text x="395.20" y="272.00" text-anchor="middle" font-size="14.95" fill="#000">2025-09-15</text><text x="394.10" y="289.60" text-anchor="middle" font-size="14.95" fill="#000">00:00:00</text><text x="480.42" y="272.00" text-anchor="middle" font-size="14.95" fill="#000">2025-09-18</text><text x="479.32" y="289.60" text-anchor="middle" font-size="14.95" fill="#000">12:00:00</text><text x="565.65" y="272.00" text-anchor="middle" font-size="14.95" fill="#000">2025-09-22</text><text x="564.55" y="289.60" text-anchor="middle" font-size="14.95" fill="#000">00:00:00</text><text x="650.88" y="272.00" text-anchor="middle" font-size="14.95" fill="#000">2025-09-25</text><text x="649.77" y="289.60" text-anchor="middle" font-size="14.95" fill="#000">12:00:00</text><text x="736.10" y="272.00" text-anchor="middle" font-size="14.95" fill="#000">2025-09-29</text><text x="735.00" y="289.60" text-anchor="middle" font-size="14.95" fill="#000">00:00:00</text><clipPath id="c2894"><rect x="52.4" y="1.5" width="740.50" height="248.00"/></clipPath><circle clip-path="url(#c2894)" cx="52.40" cy="243.06" r="6.9" fill="#a61120" stroke="#630a13" stroke-width="1.4"/></svg><div class="a row" style="top:306.0px;height:29.0px;width:792px"><span class="a" style="left:12px;top:0.15px">Total Mails</span><span class="a" style="left:288px;top:0.15px">729229</span><div class="bar" style="left:460px;width:322px;top:3.00px"><div class="fill" style="width:322.0px"></div><div class="btxt">100%</div></div></div><div class="a row alt" style="top:335.0px;height:29.0px;width:792px"><span class="a" style="left:12px;top:-0.23px">Incoming Mails</span><span class="a" style="left:288px;top:-0.23px">715870</span><div class="bar" style="left:460px;width:322px;top:2.47px"><div class="fill" style="width:316.1px"></div><div class="btxt">98%</div></div></div><div class="a row" style="top:364.0px;height:28.0px;width:792px"><span class="a" style="left:12px;top:-0.61px">Outgoing Mails</span><span class="a" style="left:288px;top:-0.61px">13359</span><div class="bar" style="left:460px;width:322px;top:1.94px"><div class="fill" style="width:5.9px"></div><div class="btxt">2%</div></div></div><div class="a row alt" style="top:392.0px;height:29.0px;width:792px"><span class="a" style="left:12px;top:0.01px">Virus Outbreaks</span><span class="a" style="left:288px;top:0.01px">0</span></div><div class="a row" style="top:421.0px;height:29.0px;width:792px"><span class="a" style="left:12px;top:-0.37px">Avg. Mail Processing Time</span><span class="a" style="left:288px;top:-0.37px">1.18 seconds</span></div><div class="a row alt" style="top:450.0px;height:28.0px;width:792px"><span class="a" style="left:12px;top:-0.75px">Incoming Mail Traffic</span><span class="a" style="left:288px;top:-0.75px">10505.56 MiB</span></div><div class="a row" style="top:478.0px;height:28.0px;width:792px"><span class="a" style="left:12px;top:-0.13px">Outgoing Mail Traffic</span><span class="a" style="left:288px;top:-0.13px">1370.08 MiB</span></div></div><div class="a ph" style="left:1052px;top:144px;width:794px"><div class="a pt" style="top:8px">Incoming Mails</div><div class="a lg" style="left:297.3px;width:460.7px;top:5.3px"><div class="li" style="left:0.0px;width:138.0px"><div class="dot" style="left:7.3px;background:#94ae0a"></div><span class="a" style="left:27.7px;top:0">Incoming Mails</span></div><div class="li" style="left:138.0px;width:110.9px"><div class="dot" style="left:7.3px;background:#115fa6"></div><span class="a" style="left:27.7px;top:0">Junk Mails</span></div><div class="li" style="left:248.9px;width:112.1px"><div class="dot" style="left:7.3px;background:#a61120"></div><span class="a" style="left:27.7px;top:0">Virus Mails</span></div><div class="li" style="left:361.0px;width:97.0px"><div class="dot" style="left:7.3px;background:#ff8809"></div><span class="a" style="left:27.7px;top:0">Bounces</span></div></div><svg class="a tool" style="left:765.5px;top:10px" viewBox="0 0 18 18"><circle cx="9" cy="9" r="8.2" fill="#fff" stroke="#d6e6f5" stroke-width="1.2"/><path d="M4 9 H14" stroke="#d6e6f5" stroke-width="1.2"/></svg></div><div class="a pb" style="left:1052px;top:183px;width:794px;height:507.0px"><svg class="a" style="left:-1px;top:0px" width="794" height="306" viewBox="0 0 794 306"><path d="M52.40 11.5 V249.5 M64.58 11.5 V249.5 M76.75 11.5 V249.5 M88.93 11.5 V249.5 M101.10 11.5 V249.5 M113.28 11.5 V249.5 M125.45 11.5 V249.5 M137.62 11.5 V249.5 M149.80 11.5 V249.5 M161.97 11.5 V249.5 M174.15 11.5 V249.5 M186.33 11.5 V249.5 M198.50 11.5 V249.5 M210.68 11.5 V249.5 M222.85 11.5 V249.5 M235.03 11.5 V249.5 M247.20 11.5 V249.5 M259.38 11.5 V249.5 M271.55 11.5 V249.5 M283.73 11.5 V249.5 M295.90 11.5 V249.5 M308.07 11.5 V249.5 M320.25 11.5 V249.5 M332.43 11.5 V249.5 M344.60 11.5 V249.5 M356.77 11.5 V249.5 M368.95 11.5 V249.5 M381.12 11.5 V249.5 M393.30 11.5 V249.5 M405.48 11.5 V249.5 M417.65 11.5 V249.5 M429.82 11.5 V249.5 M442.00 11.5 V249.5 M454.18 11.5 V249.5 M466.35 11.5 V249.5 M478.52 11.5 V249.5 M490.70 11.5 V249.5 M502.88 11.5 V249.5 M515.05 11.5 V249.5 M527.23 11.5 V249.5 M539.40 11.5 V249.5 M551.58 11.5 V249.5 M563.75 11.5 V249.5 M575.92 11.5 V249.5 M588.10 11.5 V249.5 M600.27 11.5 V249.5 M612.45 11.5 V249.5 M624.62 11.5 V249.5 M636.80 11.5 V249.5 M648.98 11.5 V249.5 M661.15 11.5 V249.5 M673.33 11.5 V249.5 M685.50 11.5 V249.5 M697.68 11.5 V249.5 M709.85 11.5 V249.5 M722.02 11.5 V249.5 M734.20 11.5 V249.5 M746.38 11.5 V249.5 M758.55 11.5 V249.5 M770.73 11.5 V249.5 M782.90 11.5 V249.5 M52.4 249.50 H782.90 M52.4 215.50 H782.90 M52.4 181.50 H782.90 M52.4 147.50 H782.90 M52.4 113.50 H782.90 M52.4 79.50 H782.90 M52.4 45.50 H782.90 M52.4 11.50 H782.90" stroke="#dedede" stroke-width="1" fill="none" shape-rendering="crispEdges"/><path d="M52.40 101.33 L76.75 51.28 L101.10 68.35 L125.45 74.33 L149.80 97.25 L174.15 166.13 L198.50 156.48 L222.85 81.54 L247.20 67.80 L271.55 79.09 L295.90 80.32 L320.25 81.54 L344.60 139.54 L368.95 151.65 L393.30 65.83 L417.65 44.62 L442.00 38.50 L466.35 56.24 L490.70 74.33 L515.05 146.82 L539.40 98.40 L563.75 48.90 L588.10 53.80 L612.45 34.42 L636.80 47.68 L661.15 64.61 L685.50 148.04 L709.85 155.25 L734.20 77.94 L758.55 39.31 L782.90 249.50 L782.90 249.5 L52.4 249.5Z" fill="#94ae0a" fill-opacity="0.6"/><path d="M52.40 101.33 L76.75 51.28 L101.10 68.35 L125.45 74.33 L149.80 97.25 L174.15 166.13 L198.50 156.48 L222.85 81.54 L247.20 67.80 L271.55 79.09 L295.90 80.32 L320.25 81.54 L344.60 139.54 L368.95 151.65 L393.30 65.83 L417.65 44.62 L442.00 38.50 L466.35 56.24 L490.70 74.33 L515.05 146.82 L539.40 98.40 L563.75 48.90 L588.10 53.80 L612.45 34.42 L636.80 47.68 L661.15 64.61 L685.50 148.04 L709.85 155.25 L734.20 77.94 L758.55 39.31 L782.90 249.50" fill="none" stroke="#6a7d07" stroke-opacity="0.62" stroke-width="1.5" stroke-linejoin="round"/><path d="M52.40 220.46 L76.75 195.64 L101.10 206.80 L125.45 198.77 L149.80 214.48 L174.15 214.96 L198.50 197.07 L222.85 200.00 L247.20 207.20 L271.55 204.28 L295.90 201.15 L320.25 196.39 L344.60 180.68 L368.95 181.84 L393.30 189.05 L417.65 177.76 L442.00 179.46 L466.35 184.29 L490.70 187.14 L515.05 185.44 L539.40 128.66 L563.75 171.44 L588.10 178.64 L612.45 160.83 L636.80 180.68 L661.15 182.59 L685.50 178.64 L709.85 190.27 L734.20 181.84 L758.55 171.44 L782.90 249.50 L782.90 249.5 L52.4 249.5Z" fill="#115fa6" fill-opacity="0.6"/><path d="M52.40 220.46 L76.75 195.64 L101.10 206.80 L125.45 198.77 L149.80 214.48 L174.15 214.96 L198.50 197.07 L222.85 200.00 L247.20 207.20 L271.55 204.28 L295.90 201.15 L320.25 196.39 L344.60 180.68 L368.95 181.84 L393.30 189.05 L417.65 177.76 L442.00 179.46 L466.35 184.29 L490.70 187.14 L515.05 185.44 L539.40 128.66 L563.75 171.44 L588.10 178.64 L612.45 160.83 L636.80 180.68 L661.15 182.59 L685.50 178.64 L709.85 190.27 L734.20 181.84 L758.55 171.44 L782.90 249.50" fill="none" stroke="#0c4477" stroke-opacity="0.62" stroke-width="1.5" stroke-linejoin="round"/><path d="M52.40 249.50 L76.75 249.50 L101.10 249.50 L125.45 249.50 L149.80 249.50 L174.15 249.50 L198.50 249.50 L222.85 249.50 L247.20 249.50 L271.55 249.50 L295.90 249.50 L320.25 249.50 L344.60 249.50 L368.95 249.50 L393.30 249.50 L417.65 249.50 L442.00 249.50 L466.35 249.50 L490.70 249.50 L515.05 249.50 L539.40 249.50 L563.75 249.50 L588.10 249.50 L612.45 249.50 L636.80 249.50 L661.15 249.50 L685.50 249.50 L709.85 249.50 L734.20 249.50 L758.55 249.50 L782.90 249.50 L782.90 249.5 L52.4 249.5Z" fill="#a61120" fill-opacity="0.6"/><path d="M52.40 249.50 L76.75 249.50 L101.10 249.50 L125.45 249.50 L149.80 249.50 L174.15 249.50 L198.50 249.50 L222.85 249.50 L247.20 249.50 L271.55 249.50 L295.90 249.50 L320.25 249.50 L344.60 249.50 L368.95 249.50 L393.30 249.50 L417.65 249.50 L442.00 249.50 L466.35 249.50 L490.70 249.50 L515.05 249.50 L539.40 249.50 L563.75 249.50 L588.10 249.50 L612.45 249.50 L636.80 249.50 L661.15 249.50 L685.50 249.50 L709.85 249.50 L734.20 249.50 L758.55 249.50 L782.90 249.50" fill="none" stroke="#770c17" stroke-opacity="0.62" stroke-width="1.5" stroke-linejoin="round"/><path d="M52.40 249.09 L76.75 249.09 L101.10 249.09 L125.45 249.09 L149.80 249.09 L174.15 249.09 L198.50 249.09 L222.85 249.09 L247.20 249.09 L271.55 249.09 L295.90 246.78 L320.25 249.09 L344.60 249.09 L368.95 249.09 L393.30 249.09 L417.65 249.09 L442.00 249.09 L466.35 249.09 L490.70 249.09 L515.05 249.09 L539.40 249.09 L563.75 249.09 L588.10 249.09 L612.45 249.09 L636.80 249.09 L661.15 249.09 L685.50 249.09 L709.85 249.09 L734.20 249.09 L758.55 249.09 L782.90 249.50 L782.90 249.5 L52.4 249.5Z" fill="#ff8809" fill-opacity="0.6"/><path d="M52.40 249.09 L76.75 249.09 L101.10 249.09 L125.45 249.09 L149.80 249.09 L174.15 249.09 L198.50 249.09 L222.85 249.09 L247.20 249.09 L271.55 249.09 L295.90 246.78 L320.25 249.09 L344.60 249.09 L368.95 249.09 L393.30 249.09 L417.65 249.09 L442.00 249.09 L466.35 249.09 L490.70 249.09 L515.05 249.09 L539.40 249.09 L563.75 249.09 L588.10 249.09 L612.45 249.09 L636.80 249.09 L661.15 249.09 L685.50 249.09 L709.85 249.09 L734.20 249.09 L758.55 249.09 L782.90 249.50" fill="none" stroke="#b76106" stroke-opacity="0.62" stroke-width="1.5" stroke-linejoin="round"/><path d="M52.4 11.5 V249.5 H783.40 M46.90 249.50 H52.4 M46.90 215.50 H52.4 M46.90 181.50 H52.4 M46.90 147.50 H52.4 M46.90 113.50 H52.4 M46.90 79.50 H52.4 M46.90 45.50 H52.4 M46.90 11.50 H52.4 M52.40 249.5 V255.00 M64.58 249.5 V255.00 M76.75 249.5 V255.00 M88.93 249.5 V255.00 M101.10 249.5 V255.00 M113.28 249.5 V255.00 M125.45 249.5 V255.00 M137.62 249.5 V255.00 M149.80 249.5 V255.00 M161.97 249.5 V255.00 M174.15 249.5 V255.00 M186.33 249.5 V255.00 M198.50 249.5 V255.00 M210.68 249.5 V255.00 M222.85 249.5 V255.00 M235.03 249.5 V255.00 M247.20 249.5 V255.00 M259.38 249.5 V255.00 M271.55 249.5 V255.00 M283.73 249.5 V255.00 M295.90 249.5 V255.00 M308.07 249.5 V255.00 M320.25 249.5 V255.00 M332.43 249.5 V255.00 M344.60 249.5 V255.00 M356.77 249.5 V255.00 M368.95 249.5 V255.00 M381.12 249.5 V255.00 M393.30 249.5 V255.00 M405.48 249.5 V255.00 M417.65 249.5 V255.00 M429.82 249.5 V255.00 M442.00 249.5 V255.00 M454.18 249.5 V255.00 M466.35 249.5 V255.00 M478.52 249.5 V255.00 M490.70 249.5 V255.00 M502.88 249.5 V255.00 M515.05 249.5 V255.00 M527.23 249.5 V255.00 M539.40 249.5 V255.00 M551.58 249.5 V255.00 M563.75 249.5 V255.00 M575.92 249.5 V255.00 M588.10 249.5 V255.00 M600.27 249.5 V255.00 M612.45 249.5 V255.00 M624.62 249.5 V255.00 M636.80 249.5 V255.00 M648.98 249.5 V255.00 M661.15 249.5 V255.00 M673.33 249.5 V255.00 M685.50 249.5 V255.00 M697.68 249.5 V255.00 M709.85 249.5 V255.00 M722.02 249.5 V255.00 M734.20 249.5 V255.00 M746.38 249.5 V255.00 M758.55 249.5 V255.00 M770.73 249.5 V255.00 M782.90 249.5 V255.00" stroke="#000" stroke-width="1.2" fill="none"/><text x="27.10" y="254.20" text-anchor="middle" font-size="14.95" fill="#000">0</text><text x="29.17" y="220.20" text-anchor="middle" font-size="14.95" fill="#000">5 k</text><text x="29.17" y="186.20" text-anchor="middle" font-size="14.95" fill="#000">10 k</text><text x="29.17" y="152.20" text-anchor="middle" font-size="14.95" fill="#000">15 k</text><text x="29.17" y="118.20" text-anchor="middle" font-size="14.95" fill="#000">20 k</text><text x="29.17" y="84.20" text-anchor="middle" font-size="14.95" fill="#000">25 k</text><text x="29.17" y="50.20" text-anchor="middle" font-size="14.95" fill="#000">30 k</text><text x="29.17" y="16.20" text-anchor="middle" font-size="14.95" fill="#000">35 k</text><text x="54.30" y="272.00" text-anchor="middle" font-size="14.95" fill="#000">2025-09-01</text><text x="53.20" y="289.60" text-anchor="middle" font-size="14.95" fill="#000">00:00:00</text><text x="139.53" y="272.00" text-anchor="middle" font-size="14.95" fill="#000">2025-09-04</text><text x="138.43" y="289.60" text-anchor="middle" font-size="14.95" fill="#000">12:00:00</text><text x="224.75" y="272.00" text-anchor="middle" font-size="14.95" fill="#000">2025-09-08</text><text x="223.65" y="289.60" text-anchor="middle" font-size="14.95" fill="#000">00:00:00</text><text x="309.97" y="272.00" text-anchor="middle" font-size="14.95" fill="#000">2025-09-11</text><text x="308.88" y="289.60" text-anchor="middle" font-size="14.95" fill="#000">12:00:00</text><text x="395.20" y="272.00" text-anchor="middle" font-size="14.95" fill="#000">2025-09-15</text><text x="394.10" y="289.60" text-anchor="middle" font-size="14.95" fill="#000">00:00:00</text><text x="480.42" y="272.00" text-anchor="middle" font-size="14.95" fill="#000">2025-09-18</text><text x="479.32" y="289.60" text-anchor="middle" font-size="14.95" fill="#000">12:00:00</text><text x="565.65" y="272.00" text-anchor="middle" font-size="14.95" fill="#000">2025-09-22</text><text x="564.55" y="289.60" text-anchor="middle" font-size="14.95" fill="#000">00:00:00</text><text x="650.88" y="272.00" text-anchor="middle" font-size="14.95" fill="#000">2025-09-25</text><text x="649.77" y="289.60" text-anchor="middle" font-size="14.95" fill="#000">12:00:00</text><text x="736.10" y="272.00" text-anchor="middle" font-size="14.95" fill="#000">2025-09-29</text><text x="735.00" y="289.60" text-anchor="middle" font-size="14.95" fill="#000">00:00:00</text><clipPath id="c85777"><rect x="52.4" y="1.5" width="740.50" height="248.00"/></clipPath><circle clip-path="url(#c85777)" cx="758.55" cy="39.31" r="6.9" fill="#94ae0a" stroke="#586806" stroke-width="1.4"/></svg><div class="a row" style="top:306.0px;height:29.0px;width:792px"><span class="a" style="left:12px;top:0.15px">Incoming Mails</span><span class="a" style="left:288px;top:0.15px">715870</span><div class="bar" style="left:460px;width:322px;top:3.00px"><div class="fill" style="width:322.0px"></div><div class="btxt">100%</div></div></div><div class="a row alt" style="top:335.0px;height:29.0px;width:792px"><span class="a" style="left:12px;top:-0.23px">Junk Mails</span><span class="a" style="left:288px;top:-0.23px">266975</span><div class="bar" style="left:460px;width:322px;top:2.47px"><div class="fill" style="width:120.1px"></div><div class="btxt">37%</div></div></div><div class="a row" style="top:364.0px;height:28.0px;width:792px"><span class="a" style="left:12px;top:-0.61px">Greylisted Mails</span><span class="a" style="left:288px;top:-0.61px">589</span><div class="bar" style="left:460px;width:322px;top:1.94px"><div class="fill" style="width:0.3px"></div><div class="btxt">0%</div></div></div><div class="a row alt" style="top:392.0px;height:29.0px;width:792px"><span class="a" style="left:12px;top:0.01px">Spam Mails</span><span class="a" style="left:288px;top:0.01px">82146</span><div class="bar" style="left:460px;width:322px;top:2.41px"><div class="fill" style="width:36.9px"></div><div class="btxt">11%</div></div></div><div class="a row" style="top:421.0px;height:29.0px;width:792px"><span class="a" style="left:12px;top:-0.37px">SPF rejects</span><span class="a" style="left:288px;top:-0.37px">265</span><div class="bar" style="left:460px;width:322px;top:1.88px"><div class="fill" style="width:0.1px"></div><div class="btxt">0%</div></div></div><div class="a row alt" style="top:450.0px;height:28.0px;width:792px"><span class="a" style="left:12px;top:-0.75px">Bounces</span><span class="a" style="left:288px;top:-0.75px">1283</span><div class="bar" style="left:460px;width:322px;top:1.35px"><div class="fill" style="width:0.6px"></div><div class="btxt">0%</div></div></div><div class="a row" style="top:478.0px;height:28.0px;width:792px"><span class="a" style="left:12px;top:-0.13px">Virus Mails</span><span class="a" style="left:288px;top:-0.13px">51</span><div class="bar" style="left:460px;width:322px;top:1.82px"><div class="fill" style="width:0.0px"></div><div class="btxt">0%</div></div></div></div><div class="a ph" style="left:247px;top:701px;width:794px"><div class="a pt" style="top:8.9px">Outgoing Mails</div><div class="a lg" style="left:407.1px;width:350.9px;top:6.2px"><div class="li" style="left:0.0px;width:139.0px"><div class="dot" style="left:7.3px;background:#94ae0a"></div><span class="a" style="left:27.7px;top:0">Outgoing Mails</span></div><div class="li" style="left:139.0px;width:112.5px"><div class="dot" style="left:7.3px;background:#115fa6"></div><span class="a" style="left:27.7px;top:0">Virus Mails</span></div><div class="li" style="left:251.5px;width:96.7px"><div class="dot" style="left:7.3px;background:#a61120"></div><span class="a" style="left:27.7px;top:0">Bounces</span></div></div><svg class="a tool" style="left:765.5px;top:10.9px" viewBox="0 0 18 18"><circle cx="9" cy="9" r="8.2" fill="#fff" stroke="#d6e6f5" stroke-width="1.2"/><path d="M4 9 H14" stroke="#d6e6f5" stroke-width="1.2"/></svg></div><div class="a pb" style="left:247px;top:740px;width:794px;height:393.0px"><svg class="a" style="left:-1px;top:0.9px" width="794" height="306" viewBox="0 0 794 306"><path d="M52.40 11.5 V249.5 M64.58 11.5 V249.5 M76.75 11.5 V249.5 M88.93 11.5 V249.5 M101.10 11.5 V249.5 M113.28 11.5 V249.5 M125.45 11.5 V249.5 M137.62 11.5 V249.5 M149.80 11.5 V249.5 M161.97 11.5 V249.5 M174.15 11.5 V249.5 M186.33 11.5 V249.5 M198.50 11.5 V249.5 M210.68 11.5 V249.5 M222.85 11.5 V249.5 M235.03 11.5 V249.5 M247.20 11.5 V249.5 M259.38 11.5 V249.5 M271.55 11.5 V249.5 M283.73 11.5 V249.5 M295.90 11.5 V249.5 M308.07 11.5 V249.5 M320.25 11.5 V249.5 M332.43 11.5 V249.5 M344.60 11.5 V249.5 M356.77 11.5 V249.5 M368.95 11.5 V249.5 M381.12 11.5 V249.5 M393.30 11.5 V249.5 M405.48 11.5 V249.5 M417.65 11.5 V249.5 M429.82 11.5 V249.5 M442.00 11.5 V249.5 M454.18 11.5 V249.5 M466.35 11.5 V249.5 M478.52 11.5 V249.5 M490.70 11.5 V249.5 M502.88 11.5 V249.5 M515.05 11.5 V249.5 M527.23 11.5 V249.5 M539.40 11.5 V249.5 M551.58 11.5 V249.5 M563.75 11.5 V249.5 M575.92 11.5 V249.5 M588.10 11.5 V249.5 M600.27 11.5 V249.5 M612.45 11.5 V249.5 M624.62 11.5 V249.5 M636.80 11.5 V249.5 M648.98 11.5 V249.5 M661.15 11.5 V249.5 M673.33 11.5 V249.5 M685.50 11.5 V249.5 M697.68 11.5 V249.5 M709.85 11.5 V249.5 M722.02 11.5 V249.5 M734.20 11.5 V249.5 M746.38 11.5 V249.5 M758.55 11.5 V249.5 M770.73 11.5 V249.5 M782.90 11.5 V249.5 M52.4 249.50 H782.90 M52.4 225.70 H782.90 M52.4 201.90 H782.90 M52.4 178.10 H782.90 M52.4 154.30 H782.90 M52.4 130.50 H782.90 M52.4 106.70 H782.90 M52.4 82.90 H782.90 M52.4 59.10 H782.90 M52.4 35.30 H782.90 M52.4 11.50 H782.90" stroke="#dedede" stroke-width="1" fill="none" shape-rendering="crispEdges"/><path d="M52.40 24.11 L76.75 123.12 L101.10 105.03 L125.45 92.42 L149.80 33.16 L174.15 218.56 L198.50 161.20 L222.85 145.49 L247.20 143.11 L271.55 126.69 L295.90 133.59 L320.25 137.16 L344.60 224.03 L368.95 236.17 L393.30 36.25 L417.65 115.51 L442.00 140.02 L466.35 134.55 L490.70 159.30 L515.05 230.22 L539.40 234.27 L563.75 78.38 L588.10 143.11 L612.45 115.98 L636.80 141.69 L661.15 150.49 L685.50 229.51 L709.85 233.55 L734.20 114.08 L758.55 139.31 L782.90 249.50 L782.90 249.5 L52.4 249.5Z" fill="#94ae0a" fill-opacity="0.6"/><path d="M52.40 24.11 L76.75 123.12 L101.10 105.03 L125.45 92.42 L149.80 33.16 L174.15 218.56 L198.50 161.20 L222.85 145.49 L247.20 143.11 L271.55 126.69 L295.90 133.59 L320.25 137.16 L344.60 224.03 L368.95 236.17 L393.30 36.25 L417.65 115.51 L442.00 140.02 L466.35 134.55 L490.70 159.30 L515.05 230.22 L539.40 234.27 L563.75 78.38 L588.10 143.11 L612.45 115.98 L636.80 141.69 L661.15 150.49 L685.50 229.51 L709.85 233.55 L734.20 114.08 L758.55 139.31 L782.90 249.50" fill="none" stroke="#6a7d07" stroke-opacity="0.62" stroke-width="1.5" stroke-linejoin="round"/><path d="M52.40 249.50 L76.75 249.50 L101.10 249.50 L125.45 249.50 L149.80 249.50 L174.15 249.50 L198.50 249.50 L222.85 249.50 L247.20 249.50 L271.55 249.50 L295.90 249.50 L320.25 249.50 L344.60 249.50 L368.95 249.50 L393.30 249.50 L417.65 249.50 L442.00 249.50 L466.35 249.50 L490.70 249.50 L515.05 249.50 L539.40 249.50 L563.75 249.50 L588.10 249.50 L612.45 249.50 L636.80 249.50 L661.15 249.50 L685.50 249.50 L709.85 249.50 L734.20 249.50 L758.55 249.50 L782.90 249.50 L782.90 249.5 L52.4 249.5Z" fill="#115fa6" fill-opacity="0.6"/><path d="M52.40 249.50 L76.75 249.50 L101.10 249.50 L125.45 249.50 L149.80 249.50 L174.15 249.50 L198.50 249.50 L222.85 249.50 L247.20 249.50 L271.55 249.50 L295.90 249.50 L320.25 249.50 L344.60 249.50 L368.95 249.50 L393.30 249.50 L417.65 249.50 L442.00 249.50 L466.35 249.50 L490.70 249.50 L515.05 249.50 L539.40 249.50 L563.75 249.50 L588.10 249.50 L612.45 249.50 L636.80 249.50 L661.15 249.50 L685.50 249.50 L709.85 249.50 L734.20 249.50 L758.55 249.50 L782.90 249.50" fill="none" stroke="#0c4477" stroke-opacity="0.62" stroke-width="1.5" stroke-linejoin="round"/><path d="M52.40 249.50 L76.75 249.50 L101.10 249.50 L125.45 249.50 L149.80 249.50 L174.15 249.50 L198.50 249.50 L222.85 249.50 L247.20 249.50 L271.55 249.50 L295.90 249.50 L320.25 249.50 L344.60 249.50 L368.95 249.50 L393.30 249.50 L417.65 249.50 L442.00 249.50 L466.35 243.55 L490.70 246.64 L515.05 249.26 L539.40 249.50 L563.75 243.55 L588.10 247.36 L612.45 248.31 L636.80 248.31 L661.15 247.83 L685.50 248.79 L709.85 249.02 L734.20 248.79 L758.55 248.31 L782.90 249.50 L782.90 249.5 L52.4 249.5Z" fill="#a61120" fill-opacity="0.6"/><path d="M52.40 249.50 L76.75 249.50 L101.10 249.50 L125.45 249.50 L149.80 249.50 L174.15 249.50 L198.50 249.50 L222.85 249.50 L247.20 249.50 L271.55 249.50 L295.90 249.50 L320.25 249.50 L344.60 249.50 L368.95 249.50 L393.30 249.50 L417.65 249.50 L442.00 249.50 L466.35 243.55 L490.70 246.64 L515.05 249.26 L539.40 249.50 L563.75 243.55 L588.10 247.36 L612.45 248.31 L636.80 248.31 L661.15 247.83 L685.50 248.79 L709.85 249.02 L734.20 248.79 L758.55 248.31 L782.90 249.50" fill="none" stroke="#770c17" stroke-opacity="0.62" stroke-width="1.5" stroke-linejoin="round"/><path d="M52.4 11.5 V249.5 H783.40 M46.90 249.50 H52.4 M46.90 225.70 H52.4 M46.90 201.90 H52.4 M46.90 178.10 H52.4 M46.90 154.30 H52.4 M46.90 130.50 H52.4 M46.90 106.70 H52.4 M46.90 82.90 H52.4 M46.90 59.10 H52.4 M46.90 35.30 H52.4 M46.90 11.50 H52.4 M52.40 249.5 V255.00 M64.58 249.5 V255.00 M76.75 249.5 V255.00 M88.93 249.5 V255.00 M101.10 249.5 V255.00 M113.28 249.5 V255.00 M125.45 249.5 V255.00 M137.62 249.5 V255.00 M149.80 249.5 V255.00 M161.97 249.5 V255.00 M174.15 249.5 V255.00 M186.33 249.5 V255.00 M198.50 249.5 V255.00 M210.68 249.5 V255.00 M222.85 249.5 V255.00 M235.03 249.5 V255.00 M247.20 249.5 V255.00 M259.38 249.5 V255.00 M271.55 249.5 V255.00 M283.73 249.5 V255.00 M295.90 249.5 V255.00 M308.07 249.5 V255.00 M320.25 249.5 V255.00 M332.43 249.5 V255.00 M344.60 249.5 V255.00 M356.77 249.5 V255.00 M368.95 249.5 V255.00 M381.12 249.5 V255.00 M393.30 249.5 V255.00 M405.48 249.5 V255.00 M417.65 249.5 V255.00 M429.82 249.5 V255.00 M442.00 249.5 V255.00 M454.18 249.5 V255.00 M466.35 249.5 V255.00 M478.52 249.5 V255.00 M490.70 249.5 V255.00 M502.88 249.5 V255.00 M515.05 249.5 V255.00 M527.23 249.5 V255.00 M539.40 249.5 V255.00 M551.58 249.5 V255.00 M563.75 249.5 V255.00 M575.92 249.5 V255.00 M588.10 249.5 V255.00 M600.27 249.5 V255.00 M612.45 249.5 V255.00 M624.62 249.5 V255.00 M636.80 249.5 V255.00 M648.98 249.5 V255.00 M661.15 249.5 V255.00 M673.33 249.5 V255.00 M685.50 249.5 V255.00 M697.68 249.5 V255.00 M709.85 249.5 V255.00 M722.02 249.5 V255.00 M734.20 249.5 V255.00 M746.38 249.5 V255.00 M758.55 249.5 V255.00 M770.73 249.5 V255.00 M782.90 249.5 V255.00" stroke="#000" stroke-width="1.2" fill="none"/><text x="27.10" y="254.20" text-anchor="middle" font-size="14.95" fill="#000">0</text><text x="27.10" y="230.40" text-anchor="middle" font-size="14.95" fill="#000">100</text><text x="27.10" y="206.60" text-anchor="middle" font-size="14.95" fill="#000">200</text><text x="27.10" y="182.80" text-anchor="middle" font-size="14.95" fill="#000">300</text><text x="27.10" y="159.00" text-anchor="middle" font-size="14.95" fill="#000">400</text><text x="27.10" y="135.20" text-anchor="middle" font-size="14.95" fill="#000">500</text><text x="27.10" y="111.40" text-anchor="middle" font-size="14.95" fill="#000">600</text><text x="27.10" y="87.60" text-anchor="middle" font-size="14.95" fill="#000">700</text><text x="27.10" y="63.80" text-anchor="middle" font-size="14.95" fill="#000">800</text><text x="27.10" y="40.00" text-anchor="middle" font-size="14.95" fill="#000">900</text><text x="29.17" y="16.20" text-anchor="middle" font-size="14.95" fill="#000">1 k</text><text x="54.30" y="272.00" text-anchor="middle" font-size="14.95" fill="#000">2025-09-01</text><text x="53.20" y="289.60" text-anchor="middle" font-size="14.95" fill="#000">00:00:00</text><text x="139.53" y="272.00" text-anchor="middle" font-size="14.95" fill="#000">2025-09-04</text><text x="138.43" y="289.60" text-anchor="middle" font-size="14.95" fill="#000">12:00:00</text><text x="224.75" y="272.00" text-anchor="middle" font-size="14.95" fill="#000">2025-09-08</text><text x="223.65" y="289.60" text-anchor="middle" font-size="14.95" fill="#000">00:00:00</text><text x="309.97" y="272.00" text-anchor="middle" font-size="14.95" fill="#000">2025-09-11</text><text x="308.88" y="289.60" text-anchor="middle" font-size="14.95" fill="#000">12:00:00</text><text x="395.20" y="272.00" text-anchor="middle" font-size="14.95" fill="#000">2025-09-15</text><text x="394.10" y="289.60" text-anchor="middle" font-size="14.95" fill="#000">00:00:00</text><text x="480.42" y="272.00" text-anchor="middle" font-size="14.95" fill="#000">2025-09-18</text><text x="479.32" y="289.60" text-anchor="middle" font-size="14.95" fill="#000">12:00:00</text><text x="565.65" y="272.00" text-anchor="middle" font-size="14.95" fill="#000">2025-09-22</text><text x="564.55" y="289.60" text-anchor="middle" font-size="14.95" fill="#000">00:00:00</text><text x="650.88" y="272.00" text-anchor="middle" font-size="14.95" fill="#000">2025-09-25</text><text x="649.77" y="289.60" text-anchor="middle" font-size="14.95" fill="#000">12:00:00</text><text x="736.10" y="272.00" text-anchor="middle" font-size="14.95" fill="#000">2025-09-29</text><text x="735.00" y="289.60" text-anchor="middle" font-size="14.95" fill="#000">00:00:00</text><clipPath id="c80930"><rect x="52.4" y="1.5" width="740.50" height="248.00"/></clipPath><circle clip-path="url(#c80930)" cx="393.30" cy="36.25" r="6.9" fill="#94ae0a" stroke="#586806" stroke-width="1.4"/></svg><div class="a row" style="top:306.0px;height:30.0px;width:792px"><span class="a" style="left:12px;top:1.20px">Outgoing Mails</span><span class="a" style="left:288px;top:1.20px">13359</span><div class="bar" style="left:460px;width:322px;top:4.10px"><div class="fill" style="width:322.0px"></div><div class="btxt">100%</div></div></div><div class="a row alt" style="top:336.0px;height:29.0px;width:792px"><span class="a" style="left:12px;top:0.60px">Bounces</span><span class="a" style="left:288px;top:0.60px">142</span><div class="bar" style="left:460px;width:322px;top:2.57px"><div class="fill" style="width:4.0px"></div><div class="btxt">1%</div></div></div><div class="a row" style="top:365.0px;height:27.0px;width:792px"><span class="a" style="left:12px;top:-0.60px">Virus Mails</span><span class="a" style="left:288px;top:-0.60px">0</span><div class="bar" style="left:460px;width:322px;top:2.04px"><div class="fill" style="width:0.0px"></div><div class="btxt">0%</div></div></div></div></body></html>
